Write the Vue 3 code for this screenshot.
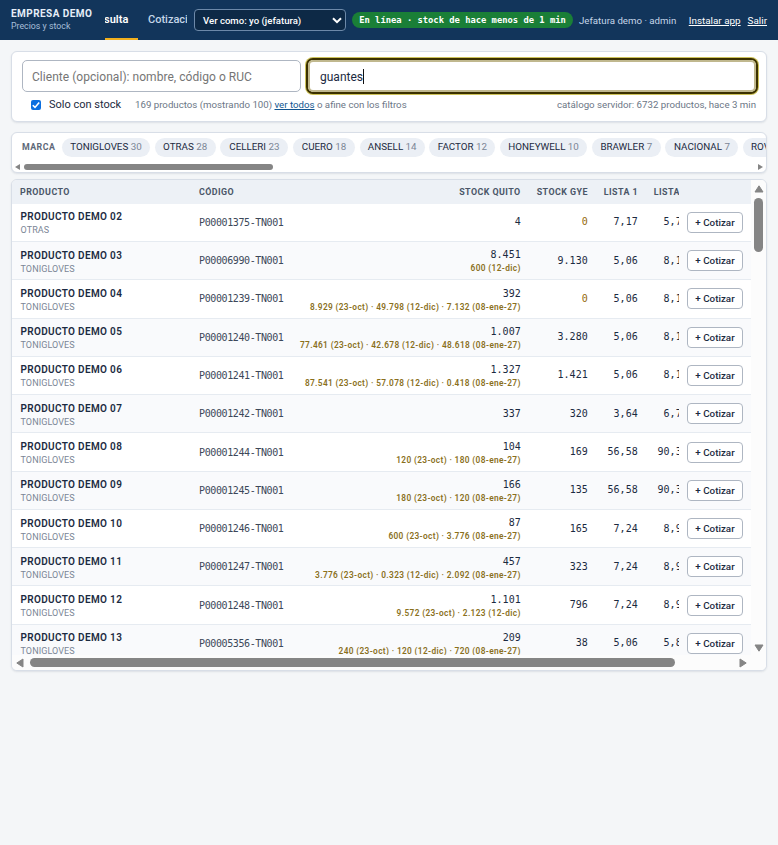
<script setup>
import { ref } from 'vue'

const search = ref('guantes')
const onlyStock = ref(true)

const brands = ref([
  { name: 'TONIGLOVES', count: 30, w: 88 },
  { name: 'OTRAS', count: 28, w: 61 },
  { name: 'CELLERI', count: 23, w: 68 },
  { name: 'CUERO', count: 18, w: 62 },
  { name: 'ANSELL', count: 14, w: 65 },
  { name: 'FACTOR', count: 12, w: 66 },
  { name: 'HONEYWELL', count: 10, w: 87 },
  { name: 'BRAWLER', count: 7, w: 69 },
  { name: 'NACIONAL', count: 7, w: 73 },
  { name: 'ROVAL', count: 6, w: 54 }
])

const products = ref([
  { n: '02', brand: 'OTRAS', code: 'P00001375-TN001', uio: '4', inbound: '', gye: '0', l1: '7,17', l2: '5,74' },
  { n: '03', brand: 'TONIGLOVES', code: 'P00006990-TN001', uio: '8.451', inbound: '600 (12-dic)', gye: '9.130', l1: '5,06', l2: '8,10' },
  { n: '04', brand: 'TONIGLOVES', code: 'P00001239-TN001', uio: '392', inbound: '8.929 (23-oct) · 49.798 (12-dic) · 7.132 (08-ene-27)', gye: '0', l1: '5,06', l2: '8,10' },
  { n: '05', brand: 'TONIGLOVES', code: 'P00001240-TN001', uio: '1.007', inbound: '77.461 (23-oct) · 42.678 (12-dic) · 48.618 (08-ene-27)', gye: '3.280', l1: '5,06', l2: '8,10' },
  { n: '06', brand: 'TONIGLOVES', code: 'P00001241-TN001', uio: '1.327', inbound: '87.541 (23-oct) · 57.078 (12-dic) · 0.418 (08-ene-27)', gye: '1.421', l1: '5,06', l2: '8,10' },
  { n: '07', brand: 'TONIGLOVES', code: 'P00001242-TN001', uio: '337', inbound: '', gye: '320', l1: '3,64', l2: '6,74' },
  { n: '08', brand: 'TONIGLOVES', code: 'P00001244-TN001', uio: '104', inbound: '120 (23-oct) · 180 (08-ene-27)', gye: '169', l1: '56,58', l2: '90,33' },
  { n: '09', brand: 'TONIGLOVES', code: 'P00001245-TN001', uio: '166', inbound: '180 (23-oct) · 120 (08-ene-27)', gye: '135', l1: '56,58', l2: '90,33' },
  { n: '10', brand: 'TONIGLOVES', code: 'P00001246-TN001', uio: '87', inbound: '600 (23-oct) · 3.776 (08-ene-27)', gye: '165', l1: '7,24', l2: '8,96' },
  { n: '11', brand: 'TONIGLOVES', code: 'P00001247-TN001', uio: '457', inbound: '3.776 (23-oct) · 0.323 (12-dic) · 2.092 (08-ene-27)', gye: '323', l1: '7,24', l2: '8,96' },
  { n: '12', brand: 'TONIGLOVES', code: 'P00001248-TN001', uio: '1.101', inbound: '9.572 (23-oct) · 2.123 (12-dic)', gye: '796', l1: '7,24', l2: '8,96' },
  { n: '13', brand: 'TONIGLOVES', code: 'P00005356-TN001', uio: '209', inbound: '240 (23-oct) · 120 (12-dic) · 720 (08-ene-27)', gye: '38', l1: '5,06', l2: '5,88' }
])
</script>

<template>
  <div class="app">
    <header class="topbar">
      <div class="company">
        <strong>EMPRESA DEMO</strong>
        <span>Precios y stock</span>
      </div>
      <nav class="tabs">
        <div class="tabs-track">
          <a class="tab active">Consulta</a>
          <a class="tab">Cotización</a>
        </div>
      </nav>
      <div class="view-as">
        <span>Ver como: yo (jefatura)</span>
        <svg width="10" height="7" viewBox="0 0 10 7"><path d="M1 1.2 L5 5.2 L9 1.2" fill="none" stroke="#fff" stroke-width="2" /></svg>
      </div>
      <div class="status">En línea · stock de hace menos de 1 min</div>
      <span class="user">Jefatura demo · admin</span>
      <a class="link install">Instalar app</a>
      <a class="link exit">Salir</a>
    </header>

    <section class="card search-card">
      <div class="fields">
        <div class="field client">Cliente (opcional): nombre, código o RUC</div>
        <div class="field query"><span>{{ search }}</span><i class="caret"></i></div>
      </div>
      <div class="meta">
        <span class="check" :class="{ on: onlyStock }" @click="onlyStock = !onlyStock">
          <svg v-if="onlyStock" width="10" height="10" viewBox="0 0 10 10"><path d="M1.8 5.2 L4 7.4 L8.2 2.4" fill="none" stroke="#fff" stroke-width="1.6" /></svg>
        </span>
        <span class="check-label">Solo con stock</span>
        <span class="count">169 productos (mostrando 100) <a>ver todos</a> o afine con los filtros</span>
        <span class="catalog">catálogo servidor: 6732 productos, hace 3 min</span>
      </div>
    </section>

    <section class="card brand-card">
      <div class="brands">
        <span class="brands-title">MARCA</span>
        <span v-for="b in brands" :key="b.name" class="chip" :style="{ width: b.w + 'px' }">
          {{ b.name }}&nbsp;<em>{{ b.count }}</em>
        </span>
      </div>
      <div class="brand-scroll">
        <svg width="5" height="6" viewBox="0 0 5 6"><path d="M5 0 V6 L0 3 Z" fill="#858585" /></svg>
        <div class="brand-thumb"></div>
        <svg class="end" width="5" height="6" viewBox="0 0 5 6"><path d="M0 0 V6 L5 3 Z" fill="#858585" /></svg>
      </div>
    </section>

    <section class="card table-card">
      <div class="table-main">
        <div class="table">
          <div class="row head">
            <div class="cell">PRODUCTO</div>
            <div class="cell">CÓDIGO</div>
            <div class="cell right">STOCK QUITO</div>
            <div class="cell right">STOCK GYE</div>
            <div class="cell right">LISTA 1</div>
            <div class="cell cut"><div>LISTA 2</div></div>
            <div></div>
          </div>
          <div v-for="p in products" :key="p.n" class="row body">
            <div class="cell product">
              <div class="name">PRODUCTO DEMO {{ p.n }}</div>
              <div class="brand">{{ p.brand }}</div>
            </div>
            <div class="cell code">{{ p.code }}</div>
            <div class="cell right" :class="{ stacked: p.inbound }">
              <div class="num">{{ p.uio }}</div>
              <div v-if="p.inbound" class="inbound">{{ p.inbound }}</div>
            </div>
            <div class="cell right num" :class="{ zero: p.gye === '0' }">{{ p.gye }}</div>
            <div class="cell right num">{{ p.l1 }}</div>
            <div class="cell cut num"><div>{{ p.l2 }}</div></div>
            <div class="action"><button>+ Cotizar</button></div>
          </div>
        </div>
        <div class="vscroll">
          <svg width="10" height="8" viewBox="0 0 10 8"><path d="M5 0.8 L9 7 H1 Z" fill="#858585" stroke="#858585" stroke-linejoin="round" /></svg>
          <div class="vthumb"></div>
          <svg class="end" width="10" height="8" viewBox="0 0 10 8"><path d="M5 7.2 L9 1 H1 Z" fill="#858585" stroke="#858585" stroke-linejoin="round" /></svg>
        </div>
      </div>
      <div class="hscroll">
        <svg width="8" height="10" viewBox="0 0 8 10"><path d="M0.8 5 L7 1 V9 Z" fill="#858585" stroke="#858585" stroke-linejoin="round" /></svg>
        <div class="hthumb"></div>
        <svg class="end" width="8" height="10" viewBox="0 0 8 10"><path d="M7.2 5 L1 1 V9 Z" fill="#858585" stroke="#858585" stroke-linejoin="round" /></svg>
      </div>
    </section>
  </div>
</template>

<style>
body {
  background: #f4f6f8;
}
</style>

<style scoped>
.app {
  min-height: 845px;
  width: 778px;
  overflow: hidden;
  background: #f4f6f8;
  color: #1b2a41;
  font-family: 'Roboto', 'Noto Sans', sans-serif;
  font-size: 11px;
  white-space: nowrap;
}

.app * {
  box-sizing: border-box;
}

.topbar {
  height: 40px;
  padding: 0 11px;
  background: #12355b;
  color: #fff;
  display: flex;
  align-items: center;
}

.company {
  width: 94px;
  flex: none;
  display: flex;
  flex-direction: column;
}

.company strong {
  font-size: 10px;
  line-height: 12px;
  letter-spacing: 0.45px;
  color: #e6eef8;
}

.company span {
  font-size: 8.8px;
  line-height: 13px;
  color: #a9bfd9;
}

.tabs {
  width: 82px;
  height: 40px;
  flex: none;
  overflow: hidden;
}

.tabs-track {
  display: flex;
  margin-left: -30.5px;
}

.tab {
  flex: none;
  height: 40px;
  padding: 0 10px;
  line-height: 39px;
  font-size: 11px;
  font-weight: 500;
  color: #c5d5e8;
}

.tab.active {
  width: 63.5px;
  text-align: right;
  font-weight: 600;
  color: #fff;
  border-bottom: 2px solid #f2b01e;
}

.view-as {
  width: 152px;
  height: 22px;
  margin-left: 7px;
  padding: 0 3px 0 8px;
  flex: none;
  border: 1px solid #6d89a9;
  border-radius: 4px;
  background: #0d2946;
  font-size: 9.6px;
  font-weight: 500;
  display: flex;
  align-items: center;
  justify-content: space-between;
}

.status {
  width: 221px;
  height: 16px;
  margin-left: 6px;
  flex: none;
  border-radius: 8px;
  background: #1a7f37;
  font-family: 'DejaVu Sans Mono', 'Liberation Mono', monospace;
  font-size: 8.8px;
  font-weight: 700;
  line-height: 16px;
  text-align: center;
}

.user {
  width: 98px;
  margin-left: 6px;
  font-size: 9.7px;
  color: #c5d5e8;
}

.link {
  font-size: 9.9px;
  text-decoration: underline;
}

.install {
  width: 53px;
  margin-left: 12px;
}

.exit {
  margin-left: 6px;
}

.card {
  margin: 0 11px;
  border: 1px solid #d8dee7;
  border-radius: 6px;
  background: #fff;
  box-shadow: 0 1px 2px rgba(20, 40, 70, 0.1);
}

.search-card {
  height: 71px;
  margin-top: 11px;
  padding: 8px 10px 0;
}

.fields {
  display: flex;
  gap: 7px;
}

.field {
  height: 32px;
  border: 1px solid #aeb6c2;
  border-radius: 5px;
  padding: 0 10px;
  font-size: 12px;
  display: flex;
  align-items: center;
}

.client {
  width: 279px;
  padding-left: 9px;
  padding-top: 1px;
  letter-spacing: 0.04px;
  color: #757575;
}

.query {
  flex: 1;
  padding-top: 1px;
  border: 2px solid #c0b88e;
  box-shadow: 0 0 0 2px #3a3000, 0 0 0 3px #cdc25a;
}

.caret {
  width: 1px;
  height: 15px;
  background: #111;
}

.meta {
  height: 25px;
  padding-left: 9px;
  display: flex;
  align-items: center;
  font-size: 9.7px;
  color: #6b7686;
}

.check {
  width: 10px;
  height: 10px;
  border: 1px solid #767676;
  border-radius: 2px;
  display: flex;
  align-items: center;
  justify-content: center;
}

.check.on {
  border: none;
  background: #0b6fe0;
}

.check-label {
  width: 86px;
  margin-left: 8px;
  font-size: 11px;
  color: #1b2a41;
}

.count a {
  color: #12558f;
  text-decoration: underline;
}

.catalog {
  margin-left: auto;
}

.brand-card {
  height: 41px;
  margin-top: 10px;
}

.brands {
  height: 28px;
  padding-left: 10px;
  overflow: hidden;
  display: flex;
  align-items: center;
  gap: 4.7px;
}

.brands-title {
  width: 35.3px;
  flex: none;
  font-size: 8.8px;
  font-weight: 700;
  letter-spacing: 0.45px;
  color: #5d6878;
}

.chip {
  flex: none;
  height: 19px;
  border-radius: 10px;
  background: #ebeff5;
  line-height: 18px;
  text-align: center;
  font-size: 9.8px;
}

.chip em {
  font-style: normal;
  color: #7b8696;
}

.brand-scroll {
  height: 11px;
  padding: 0 3px;
  display: flex;
  align-items: center;
}

.brand-thumb {
  width: 249px;
  height: 6px;
  margin-left: 4px;
  border-radius: 3px;
  background: #858585;
}

.end {
  margin-left: auto;
}

.table-card {
  height: 492px;
  margin-top: 6px;
  overflow: hidden;
}

.table-main {
  height: 475px;
  display: flex;
}

.table {
  width: 739px;
  overflow: hidden;
}

.row {
  display: grid;
  grid-template-columns: 179px 101px 236.7px 67px 50px 33.3px 72px;
  align-items: center;
}

.head {
  height: 23.8px;
  background: #edf1f6;
  color: #4a5668;
  font-size: 8.9px;
  font-weight: 700;
  letter-spacing: 0.45px;
}

.body {
  height: 38.27px;
  border-bottom: 1px solid #e6ebf1;
}

.body:nth-child(odd) {
  background: #f9fafc;
}

.cell {
  padding: 0 8px;
}

.right {
  text-align: right;
}

.cut {
  padding-right: 0;
  overflow: hidden;
}

.cut div {
  width: 34px;
  text-align: right;
}

.product {
  padding-top: 3px;
  padding-left: 8.5px;
}

.stacked {
  padding-top: 2.6px;
}

.name {
  font-size: 10px;
  line-height: 14px;
  font-weight: 600;
  letter-spacing: 0.34px;
}

.brand {
  font-size: 9px;
  line-height: 13px;
  letter-spacing: 0.1px;
  color: #7b8696;
}

.code {
  font-family: 'DejaVu Sans Mono', monospace;
  font-size: 10px;
  letter-spacing: -0.39px;
  color: #3c4859;
}

.num {
  font-family: 'DejaVu Sans Mono', monospace;
  font-size: 10px;
  line-height: 14px;
}

.zero {
  color: #94690a;
}

.inbound {
  font-size: 8.3px;
  line-height: 13px;
  font-weight: 600;
  letter-spacing: 0.36px;
  color: #8a701c;
}

.action {
  padding-left: 8px;
}

.action button {
  width: 56px;
  height: 21px;
  padding: 0;
  border: 1px solid #aeb6c2;
  border-radius: 4px;
  background: #fff;
  color: #1b2a41;
  font-family: inherit;
  font-size: 9.8px;
  font-weight: 500;
  display: block;
}

.vscroll {
  width: 15px;
  padding: 5px 0 3px;
  background: #fcfcfc;
  display: flex;
  flex-direction: column;
  align-items: center;
}

.vthumb {
  width: 9px;
  height: 54px;
  margin-top: 5px;
  border-radius: 5px;
  background: #858585;
}

.vscroll .end {
  margin: auto 0 0;
}

.hscroll {
  height: 15px;
  padding: 0 19px 0 4px;
  background: #fcfcfc;
  display: flex;
  align-items: center;
}

.hthumb {
  width: 645px;
  height: 9px;
  margin-left: 6px;
  border-radius: 5px;
  background: #858585;
}
</style>
